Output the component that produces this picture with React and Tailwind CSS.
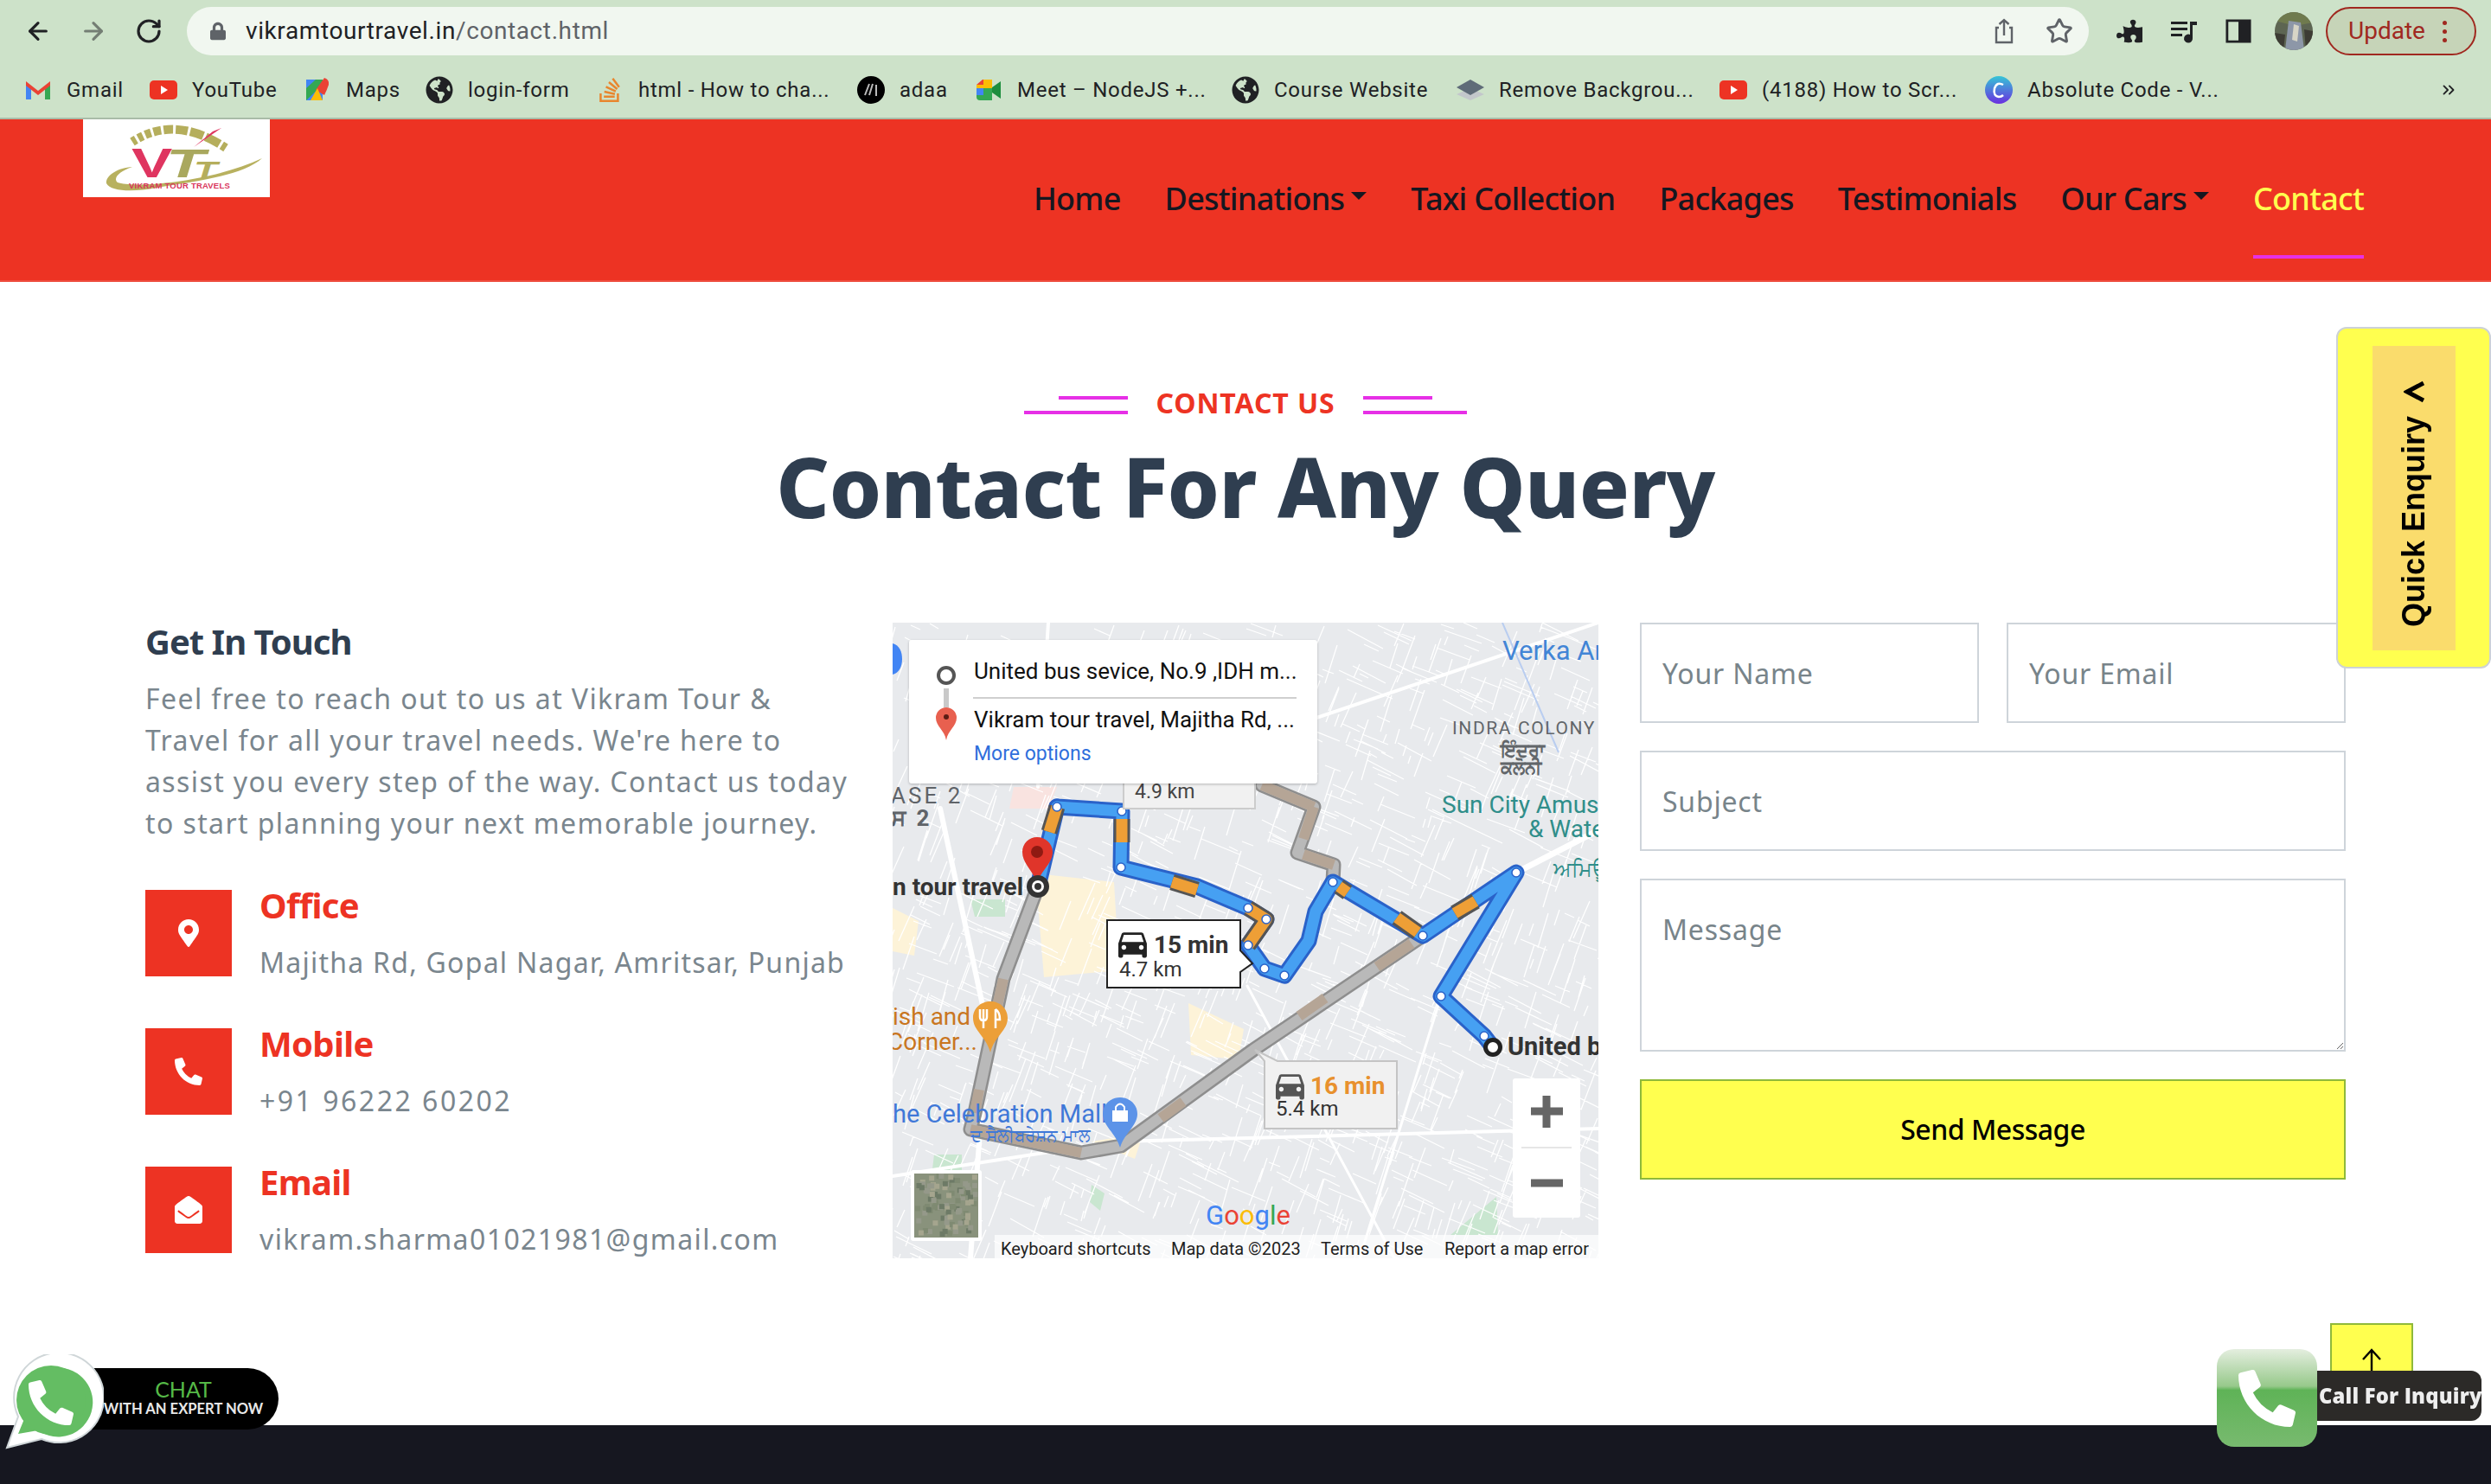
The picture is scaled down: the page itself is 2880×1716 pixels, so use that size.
import { ArrowLeft, ArrowRight, RotateCw, Star, ChevronsRight } from 'lucide-react';
import { FaMapMarkerAlt, FaPhoneAlt, FaEnvelopeOpen, FaGlobeAmericas, FaStackOverflow, FaPuzzlePiece, FaLock } from 'react-icons/fa';

const pageFont = "font-['Noto_Sans',sans-serif]";
const uiFont = "font-['Roboto',sans-serif]";

// thin street mesh for the map, seeded so it stays the same on every load
let seed = 7;
const rnd = () => {
    seed = (seed * 16807) % 2147483647;
    return seed / 2147483647;
};
const streets = [];
for (let i = 0; i < 1500; i++) {
    const x = rnd() * 816;
    const y = rnd() * 735;
    const a = rnd() > 0.5 ? 0.35 + rnd() * 0.15 : 1.85 + rnd() * 0.15;
    const len = 10 + rnd() * 38;
    streets.push(`M${x.toFixed(0)} ${y.toFixed(0)}L${(x + Math.cos(a) * len).toFixed(0)} ${(y + Math.sin(a) * len).toFixed(0)}`);
}
const speckles = [];
for (let i = 0; i < 90; i++) {
    speckles.push({ x: 25 + rnd() * 68, y: 637 + rnd() * 68, c: ['#6d7a66', '#a5a58e', '#7f8a72', '#95998a'][Math.floor(rnd() * 4)] });
}

const CAR = 'M18.92 6.01C18.72 5.42 18.16 5 17.5 5h-11c-.66 0-1.21.42-1.42 1.01L3 12v8c0 .55.45 1 1 1h1c.55 0 1-.45 1-1v-1h12v1c0 .55.45 1 1 1h1c.55 0 1-.45 1-1v-8l-2.08-5.99zM6.5 16c-.83 0-1.5-.67-1.5-1.5S5.67 13 6.5 13s1.5.67 1.5 1.5S7.33 16 6.5 16zm11 0c-.83 0-1.5-.67-1.5-1.5s.67-1.5 1.5-1.5 1.5.67 1.5 1.5-.67 1.5-1.5 1.5zM5 11l1.5-4.5h11L19 11H5z';

const blueRoute = '190,213 265,218 264,283 352,305 411,330 432,343 411,373 430,400 453,408 481,368 489,334 509,300 613,362 721,289 634,432 684,478 694,491';
const startLeg = '168,305 190,213';
const grayOne = '168,305 128,412 95,567 90,586 218,613 264,605 417,494 613,362';
const grayTwo = '427,188 487,213 468,266 510,280 509,300';
const orangeBits = ['190,213 181,242', '265,227 265,254', '323,300 352,309', '411,330 432,343 411,373', '516,305 526,312', '583,341 607,358', '650,336 674,322'];
const brownBits = ['128,412 115,470', '100,540 95,567', '90,586 218,613', '310,573 336,554', '470,455 500,434', '560,398 600,371', '427,188 487,213', '487,213 475,250', '475,268 510,280'];
const dots = ['190,213', '265,218', '264,283', '411,330', '432,343', '411,373', '430,400', '453,408', '509,300', '613,362', '721,289', '634,432', '684,478'];

function MapDrawing() {
    return (
        <svg viewBox="0 0 816 735" className="block w-full h-full">
            <rect width="816" height="735" fill="#e8eaed" />
            <path d="M165 290L256 300L262 402L175 410Z M342 440L406 470L400 505L345 500Z M0 330L30 345L25 385L0 380Z M230 600L290 590L280 620Z" fill="#fdf3d8" />
            <path d="M90 320H130V340H95Z M645 708L698 664L700 708Z M48 615H80V640H45Z M230 650L245 660L240 680L228 670Z" fill="#c9e6d0" />
            <path d="M140 190H190L180 215H135Z" fill="#f9e3e0" />
            <path d={streets.join('')} stroke="#fff" strokeWidth="1.3" fill="none" />
            <g stroke="#fff" fill="none" strokeLinecap="round">
                <path d="M55 215L110 470L90 735" strokeWidth="6" />
                <path d="M0 640L260 600L816 585" strokeWidth="4" />
                <path d="M721 289L816 240" strokeWidth="7" />
                <path d="M490 110L816 0" strokeWidth="4" />
                <path d="M634 432L540 735" strokeWidth="3" />
                <path d="M410 420L580 735" strokeWidth="3" />
                <path d="M168 190L180 0" strokeWidth="4" />
            </g>
            <path d="M705 0L770 150" stroke="#b9cdf0" strokeWidth="2" fill="none" />

            <g fill="none" strokeLinejoin="round" strokeLinecap="round">
                <polyline points={grayOne} stroke="#8e8e8e" strokeWidth="17" />
                <polyline points={grayTwo} stroke="#8e8e8e" strokeWidth="17" />
                <polyline points={grayOne} stroke="#b9b9b9" strokeWidth="12" />
                <polyline points={grayTwo} stroke="#b9b9b9" strokeWidth="12" />
                {brownBits.map((p) => <polyline key={p} points={p} stroke="#b5a596" strokeWidth="12" strokeLinecap="butt" />)}
                <polyline points={startLeg} stroke="#2a62c9" strokeWidth="19" />
                <polyline points={blueRoute} stroke="#2a62c9" strokeWidth="19" />
                <polyline points={startLeg} stroke="#46a0f2" strokeWidth="13" />
                <polyline points={blueRoute} stroke="#46a0f2" strokeWidth="13" />
                {orangeBits.map((p) => <polyline key={p} points={p} stroke="#555" strokeWidth="19" strokeLinecap="butt" />)}
                {orangeBits.map((p) => <polyline key={p + 'o'} points={p} stroke="#ee9f36" strokeWidth="13" strokeLinecap="butt" />)}
            </g>
            {dots.map((p) => {
                const [cx, cy] = p.split(',');
                return <circle key={p} cx={cx} cy={cy} r="5" fill="#fff" stroke="#2a62c9" strokeWidth="1.5" />;
            })}

            <path d="M0 24C8 26 11 34 11 42C11 50 8 58 0 60Z" fill="#4285f4" />

            {/* traffic boxes */}
            <g>
                <path d="M267 170H419V215H267Z" fill="#f1f1f1" stroke="#ccc" strokeWidth="2" />
                <text x="280" y="203" fontSize="23" fill="#444" fontFamily="Roboto, sans-serif">4.9 km</text>
                <path d="M430 507L419 494L445 507H583V585H430Z" fill="#f1f1f1" stroke="#c4c4c4" strokeWidth="2" />
                <g transform="translate(437.5 513) scale(1.83)"><path d={CAR} fill="#555" /></g>
                <text x="483" y="545" fontSize="28" fontWeight="700" fill="#e8912e" fontFamily="Roboto, sans-serif">16 min</text>
                <text x="443" y="570" fontSize="24" fill="#333" fontFamily="Roboto, sans-serif">5.4 km</text>
                <path d="M248 344H402V379L416 394L402 404V422H248Z" fill="#fff" stroke="#222" strokeWidth="2" />
                <g transform="translate(255.5 349) scale(1.83)"><path d={CAR} fill="#222" /></g>
                <text x="302" y="382" fontSize="28" fontWeight="700" fill="#333" fontFamily="Roboto, sans-serif">15 min</text>
                <text x="262" y="409" fontSize="24" fill="#333" fontFamily="Roboto, sans-serif">4.7 km</text>
            </g>

            {/* pins and markers */}
            <path d="M167 300C160 284 150 278 150 265C150 255 158 248 167 248C176 248 185 255 185 265C185 278 174 284 167 300Z" fill="#e0352a" />
            <circle cx="167" cy="265" r="7" fill="#8f1a12" />
            <circle cx="168" cy="305" r="10" fill="#fff" stroke="#333" strokeWidth="6" />
            <circle cx="168" cy="305" r="4" fill="#333" />
            <circle cx="694" cy="491" r="8.5" fill="#fff" stroke="#222" strokeWidth="5" />

            <g fontFamily="Roboto, sans-serif">
                <text x="705" y="43" fontSize="31" fill="#4285d6">Verka Amritsar</text>
                <text x="647" y="129" fontSize="21" fill="#62666a" letterSpacing="1.6">INDRA COLONY</text>
                <text x="703" y="155" fontSize="21" fontWeight="700" fill="#62666a" fontFamily="'Noto Sans', sans-serif">ਇੰਦਰਾ</text>
                <text x="703" y="175" fontSize="21" fontWeight="700" fill="#62666a" fontFamily="'Noto Sans', sans-serif">ਕਲੋਨੀ</text>
                <text x="635" y="220" fontSize="28" fill="#2f8e8a">Sun City Amusement</text>
                <text x="735" y="248" fontSize="28" fill="#2f8e8a">&amp; Water</text>
                <text x="764" y="293" fontSize="24" fill="#2f8e8a" fontFamily="'Noto Sans', sans-serif">ਅਮਿਊਜ਼</text>
                <text x="-2" y="209" fontSize="26" fill="#5f6368" letterSpacing="3">ASE 2</text>
                <text x="-2" y="235" fontSize="26" fill="#5f6368" letterSpacing="3" fontWeight="700">ਸ 2</text>
                <text x="0" y="315" fontSize="28" fontWeight="700" fill="#333">n tour travel</text>
                <text x="711" y="500" fontSize="29" fontWeight="700" fill="#333">United bus</text>
                <text x="0" y="465" fontSize="28" fill="#c9761f">ish and</text>
                <text x="-6" y="494" fontSize="28" fill="#c9761f">Corner...</text>
                <text x="0" y="578" fontSize="29" fill="#3f78d8">he Celebration Mall</text>
                <text x="90" y="600" fontSize="20" fill="#3f78d8" fontFamily="'Noto Sans', sans-serif">ਦ ਸੈਲੀਬਰੇਸ਼ਨ ਮਾਲ</text>
            </g>

            <path d="M113 497C108 478 93 472 93 457C93 446 102 438 113 438C124 438 133 446 133 457C133 472 118 478 113 497Z" fill="#ec9f38" />
            <path d="M105 447V469M101 447V456Q101 460 105 460Q109 460 109 456V447M119 447V469M119 447Q124 450 124 459H119" stroke="#fff" strokeWidth="2.5" fill="none" />
            <path d="M263 607C258 590 243 582 243 568C243 557 252 549 263 549C274 549 283 557 283 568C283 582 268 590 263 607Z" fill="#5c93e8" />
            <path d="M254 564H272V577H254Z" fill="#fff" />
            <path d="M258 564V560Q263 553 268 560V564" stroke="#fff" strokeWidth="2" fill="none" />

            {/* zoom control */}
            <rect x="717" y="527" width="78" height="161" rx="3" fill="#fff" />
            <path d="M738 565H775M756 547V584" stroke="#666" strokeWidth="9" />
            <path d="M727 607H785" stroke="#e6e6e6" strokeWidth="2" />
            <path d="M738 648H775" stroke="#666" strokeWidth="9" />

            {/* satellite thumbnail */}
            <rect x="21" y="633" width="82" height="82" rx="3" fill="#fff" />
            <rect x="25" y="637" width="74" height="74" fill="#89927c" />
            {speckles.map((s, i) => <rect key={i} x={s.x} y={s.y} width="6" height="6" fill={s.c} />)}

            <text x="362" y="696" fontSize="31" fontFamily="Roboto, sans-serif">
                <tspan fill="#4285f4">G</tspan><tspan fill="#ea4335">o</tspan><tspan fill="#fbbc05">o</tspan><tspan fill="#4285f4">g</tspan><tspan fill="#34a853">l</tspan><tspan fill="#ea4335">e</tspan>
            </text>

            <rect x="118" y="708" width="698" height="27" fill="#fff" fillOpacity="0.7" />
            <g fontSize="20" fill="#1f1f1f" fontFamily="Roboto, sans-serif">
                <text x="125" y="731">Keyboard shortcuts</text>
                <text x="322" y="731">Map data ©2023</text>
                <text x="495" y="731">Terms of Use</text>
                <text x="638" y="731">Report a map error</text>
            </g>
        </svg>
    );
}

function Logo() {
    return (
        <svg viewBox="0 0 216 90" className="block w-[216px] h-[90px] bg-white self-start ml-[96px] shrink-0">
            <path d="M57 26Q106 -6 165 33" fill="none" stroke="#b5ae5c" strokeWidth="10" strokeDasharray="5 3 6 3 7 3 9 3 11 3 14 3 16 3 18 3 20 3" />
            <path d="M160 10L128 32L150 14Z" fill="#df3560" />
            <path d="M207 45C185 65 130 72 85 79C60 84 32 84 27 74C26 65 40 56 57 55C42 60 34 68 40 73C60 80 150 72 207 45Z" fill="#b8b15f" />
            <text transform="translate(56 67) scale(1.45 1)" fontSize="49" fontWeight="700" fill="#df3560" fontFamily="'Liberation Sans', sans-serif">V</text>
            <text transform="translate(96 67) scale(1.6 1)" fontSize="46" fontWeight="700" fontStyle="italic" fill="#a9a85e" fontFamily="'Liberation Sans', sans-serif">T</text>
            <text transform="translate(128 69) scale(1.5 1)" fontSize="30" fontWeight="700" fontStyle="italic" fill="#b5ae5c" fontFamily="'Liberation Sans', sans-serif">T</text>
            <text x="53" y="80" fontSize="9.5" fontWeight="700" fill="#d9365c" letterSpacing="0.2" fontFamily="'Liberation Sans', sans-serif">VIKRAM TOUR TRAVELS</text>
        </svg>
    );
}

const bookmarks = [
    { label: 'Gmail', w: 'w-[145px]', icon: <svg viewBox="0 0 32 32" className="w-8 h-8"><path d="M2 8V27H8V14Z" fill="#4285f4" /><path d="M30 8V27H24V14Z" fill="#34a853" /><path d="M2 6L16 17L30 6V11L16 22L2 11Z" fill="#ea4335" /></svg> },
    { label: 'YouTube', w: 'w-[178px]', icon: <svg viewBox="0 0 32 32" className="w-8 h-8"><rect y="5" width="32" height="22" rx="5" fill="#ed3323" /><path d="M13 11L21 16L13 21Z" fill="#fff" /></svg> },
    { label: 'Maps', w: 'w-[141px]', icon: <svg viewBox="0 0 32 32" className="w-8 h-8"><path d="M3 4H22V28H3Z" fill="#34a853" /><path d="M3 28L22 10V28Z" fill="#4285f4" /><path d="M3 4H14L3 14Z" fill="#4285f4" /><path d="M14 16L24 2Q30 4 29 10Q27 16 24 22Z" fill="#ea4335" /><path d="M8 28L16 14L22 28Z" fill="#fbbc05" /></svg> },
    { label: 'login-form', w: 'w-[197px]', icon: <FaGlobeAmericas className="w-8 h-8 text-[#202124]" /> },
    { label: 'html - How to cha...', w: 'w-[302px]', icon: <FaStackOverflow className="w-8 h-8 text-[#e8862e]" /> },
    { label: 'adaa', w: 'w-[136px]', icon: <svg viewBox="0 0 32 32" className="w-8 h-8"><circle cx="16" cy="16" r="16" fill="#000" /><path d="M9 22L14 9M14 22L18 9M22 10V23" stroke="#bbb" strokeWidth="2" fill="none" /></svg> },
    { label: 'Meet – NodeJS +...', w: 'w-[297px]', icon: <svg viewBox="0 0 32 32" className="w-8 h-8"><path d="M2 10H10V4H20V14H2Z" fill="#fbbc05" /><path d="M2 10L9 4H10V10Z" fill="#ea4335" /><path d="M2 14H10V22H2Z" fill="#4285f4" /><path d="M10 14H20V28H6Q2 28 2 24V22H10Z" fill="#34a853" /><path d="M20 13L30 6V26L20 19Z" fill="#1e8e3e" /></svg> },
    { label: 'Course Website', w: 'w-[260px]', icon: <FaGlobeAmericas className="w-8 h-8 text-[#202124]" /> },
    { label: 'Remove Backgrou...', w: 'w-[304px]', icon: <svg viewBox="0 0 32 32" className="w-8 h-8"><path d="M16 14L32 21L16 28L0 21Z" fill="#c3c7cb" /><path d="M16 4L32 13L16 22L0 13Z" fill="#5f6b78" /></svg> },
    { label: '(4188) How to Scr...', w: 'w-[307px]', icon: <svg viewBox="0 0 32 32" className="w-8 h-8"><rect y="5" width="32" height="22" rx="5" fill="#ed3323" /><path d="M13 11L21 16L13 21Z" fill="#fff" /></svg> },
    { label: 'Absolute Code - V...', w: 'w-[300px]', icon: <svg viewBox="0 0 32 32" className="w-8 h-8"><defs><linearGradient id="absc" x1="0" y1="0" x2="0" y2="1"><stop offset="0" stopColor="#35c5d6" /><stop offset="1" stopColor="#6a2fe0" /></linearGradient></defs><circle cx="16" cy="16" r="16" fill="url(#absc)" /><path d="M21 10Q14 6 11 14Q9 23 16 24Q19 24 21 22" stroke="#fff" strokeWidth="2.5" fill="none" /></svg> },
];

function BrowserChrome() {
    return (
        <div className={`bg-[#cde2c9] border-b-2 border-[#a9bca8] ${uiFont}`}>
            <div className="h-[72px] flex items-center pl-[28px] pr-[17px]">
                <ArrowLeft className="w-8 h-8 text-[#202124] mr-[32px]" strokeWidth={2.4} />
                <ArrowRight className="w-8 h-8 text-[#747e74] mr-[32px]" strokeWidth={2.4} />
                <RotateCw className="w-8 h-8 text-[#202124] mr-[28px]" strokeWidth={2.4} />
                <div className="w-[2199px] h-14 bg-[#f1f7f0] rounded-full flex items-center pl-[27px] pr-[18px] text-[28px] tracking-[0.6px]">
                    <FaLock className="w-[18px] h-[22px] text-[#5f6368] mr-[23px]" />
                    <span className="text-[#202124]">vikramtourtravel.in<span className="text-[#5f6368]">/contact.html</span></span>
                    <div className="ml-auto flex items-center gap-[32px]">
                        <svg viewBox="0 0 32 32" className="w-8 h-8" fill="none" stroke="#5f6368" strokeWidth="2.4"><path d="M10 12H7V29H25V12H22M16 21V3M10.5 8L16 3L21.5 8" /></svg>
                        <Star className="w-8 h-8 text-[#5f6368]" strokeWidth={2.2} />
                    </div>
                </div>
                <div className="ml-[32px] flex items-center gap-[32px]">
                    <FaPuzzlePiece className="w-[30px] h-[30px] text-[#202124] scale-x-[-1]" />
                    <svg viewBox="0 0 32 32" className="w-8 h-8" fill="#202124"><path d="M1 5H20V8H1ZM1 12H20V15H1ZM1 19H14V22H1ZM23 5H31V9H26V24A5 5 0 1 1 23 20Z" /></svg>
                    <svg viewBox="0 0 32 32" className="w-[30px] h-[30px]" fill="none"><path d="M2 3H30V29H2Z" stroke="#202124" strokeWidth="3" /><path d="M16 3H30V29H16Z" fill="#202124" /></svg>
                </div>
                <svg viewBox="0 0 44 44" className="ml-[27px] w-11 h-11 rounded-full">
                    <rect width="44" height="44" fill="#5d6552" />
                    <path d="M0 0H44V12L24 16L0 10Z" fill="#6f7a4e" />
                    <path d="M16 10L30 12L34 44H12Z" fill="#8d97a8" />
                    <path d="M22 14L28 16L26 34L20 32Z" fill="#d7d5c6" />
                    <path d="M0 24L12 26L10 44H0Z M34 20L44 22V44H36Z" fill="#3d3c34" />
                </svg>
                <div className="ml-[15px] w-[174px] h-14 rounded-full border-2 border-[#a0281f] bg-[#c6d4b8] flex items-center pl-[24px] text-[28px] text-[#a0281f]">
                    <span>Update</span>
                    <span className="ml-[20px] flex flex-col gap-[5px]">
                        <span className="w-[5px] h-[5px] rounded-full bg-[#a0281f]" />
                        <span className="w-[5px] h-[5px] rounded-full bg-[#a0281f]" />
                        <span className="w-[5px] h-[5px] rounded-full bg-[#a0281f]" />
                    </span>
                </div>
            </div>
            <div className="h-[64px] flex items-center pl-[28px] text-[24px] tracking-[0.75px] text-[#202124] relative">
                {bookmarks.map((b) => (
                    <div key={b.label} className={`flex items-center gap-[17px] shrink-0 ${b.w}`}>
                        {b.icon}
                        <span className="whitespace-nowrap">{b.label}</span>
                    </div>
                ))}
                <ChevronsRight className="ml-auto mr-[38px] w-[22px] h-[22px] text-[#202124]" />
            </div>
        </div>
    );
}

function NavItem({ children, caret, active }) {
    return (
        <a className={`relative flex items-center whitespace-nowrap ${active ? 'text-[#ffff4f]' : 'text-[#161720]'}`}>
            {children}
            {caret && <span className="ml-[8px] mt-[-6px] w-0 h-0 border-x-[9px] border-x-transparent border-t-[9px] border-t-[#161720]" />}
            {active && <span className="absolute left-0 right-0 top-[92px] h-1 bg-[#e630e6]" />}
        </a>
    );
}

function NavBar() {
    return (
        <nav className={`h-[188px] bg-[#ed3323] border-b-2 border-[#ee4d3e] flex items-center pr-[147px] ${pageFont}`}>
            <Logo />
            <div className="ml-auto mt-[-3px] flex items-center gap-[51px] text-[36px] font-medium tracking-[-0.75px]">
                <NavItem>Home</NavItem>
                <NavItem caret>Destinations</NavItem>
                <NavItem>Taxi Collection</NavItem>
                <NavItem>Packages</NavItem>
                <NavItem>Testimonials</NavItem>
                <NavItem caret>Our Cars</NavItem>
                <NavItem active>Contact</NavItem>
            </div>
        </nav>
    );
}

function InfoRow({ icon, title, value, spacing }) {
    return (
        <div className="flex gap-8 items-start h-[100px]">
            <div className="w-[100px] h-[100px] bg-[#ed3323] flex items-center justify-center text-white shrink-0">{icon}</div>
            <div>
                <h5 className="text-[40px] leading-[48px] font-bold text-[#ed3323] tracking-[-0.7px] mt-[-6px]">{title}</h5>
                <p className={`mt-[18px] text-[32px] leading-[48px] text-[#7a868e] whitespace-nowrap ${spacing}`}>{value}</p>
            </div>
        </div>
    );
}

function RouteMap() {
    return (
        <div className="relative h-[735px] overflow-hidden">
            <MapDrawing />
            <div className={`absolute left-[19px] top-[20px] w-[472px] h-[166px] bg-white rounded-[3px] shadow-[0_1px_3px_rgba(0,0,0,0.25)] ${uiFont}`}>
                <div className="absolute left-[32px] top-[30px] w-[22px] h-[22px] rounded-full border-[4px] border-[#555] bg-white" />
                <div className="absolute left-[40px] top-[56px] w-[6px] h-[22px] bg-[#c9c9c9]" />
                <svg viewBox="0 0 24 38" className="absolute left-[31px] top-[78px] w-6 h-[38px]"><path d="M12 38C10 26 0 22 0 12A12 12 0 0 1 24 12C24 22 14 26 12 38Z" fill="#e8604f" /><circle cx="12" cy="11" r="3" fill="#5a1c14" /></svg>
                <p className="absolute left-[75px] top-[16px] text-[26px] leading-[40px] text-[#111] whitespace-nowrap">United bus sevice, No.9 ,IDH m...</p>
                <div className="absolute left-[74px] right-[24px] top-[66px] h-[2px] bg-[#cfcfcf]" />
                <p className="absolute left-[75px] top-[72px] text-[26px] leading-[40px] text-[#111] whitespace-nowrap">Vikram tour travel, Majitha Rd, ...</p>
                <p className="absolute left-[75px] top-[115px] text-[23px] leading-[34px] text-[#2f6fdc]">More options</p>
            </div>
        </div>
    );
}

const fieldClass = 'w-full border-2 border-[#ced4da] bg-white px-[24px] text-[32px] text-[#212529] placeholder:text-[#78848a] outline-none tracking-[0.8px]';

function ContactForm() {
    return (
        <form className="flex flex-col gap-8">
            <div className="grid grid-cols-2 gap-8">
                <input className={`${fieldClass} h-[116px]`} placeholder="Your Name" />
                <input className={`${fieldClass} h-[116px]`} placeholder="Your Email" />
            </div>
            <input className={`${fieldClass} h-[116px]`} placeholder="Subject" />
            <textarea className={`${fieldClass} h-[200px] py-[33px] resize-y block`} placeholder="Message" />
            <button type="button" className="h-[116px] bg-[#ffff4f] border-2 border-[#8fb93a] text-black text-[32px] font-medium tracking-[-0.5px]">Send Message</button>
        </form>
    );
}

function FloatingWidgets() {
    return (
        <>
            {/* quick enquiry tab */}
            <div className="absolute left-[2701px] top-[378px] w-[179px] h-[395px] bg-[#ffff4f] border-2 border-[#cdd2d6] rounded-[12px] flex items-center justify-center">
                <div className="w-[96px] h-[352px] bg-[#fadc6c] flex flex-col items-center pt-[40px] gap-[15px]">
                    <svg viewBox="0 0 24 26" className="w-[24px] h-[26px] shrink-0" fill="none" stroke="#000" strokeWidth="5"><path d="M23 3L4 13L23 23" /></svg>
                    <span className="[writing-mode:vertical-rl] rotate-180 text-[36px] leading-[40px] font-bold text-black whitespace-nowrap font-['Liberation_Sans',sans-serif] blur-[0.4px]">Quick Enquiry</span>
                </div>
            </div>

            {/* whatsapp chat badge */}
            <div className="absolute left-[60px] top-[1582px] w-[262px] h-[71px] bg-black rounded-r-[36px] flex flex-col items-center pl-[42px] font-['Lato',sans-serif]">
                <span className="text-[25px] leading-[26px] mt-[11px] text-[#55b947]">CHAT</span>
                <span className="text-[16.6px] leading-[20px] font-bold text-[#e8e8e8] whitespace-nowrap">WITH AN EXPERT NOW</span>
            </div>
            <svg viewBox="0 0 116 112" className="absolute left-[4px] top-[1566px] w-[116px] h-[112px]">
                <path d="M4 108L17 72A52 52 0 1 1 44 98Z" fill="#fff" stroke="#cfd6d8" strokeWidth="2" />
                <path d="M17 92L26 70A40 40 0 1 1 40 88Z" fill="#64bd63" />
                <circle cx="55" cy="53" r="40" fill="#64bd63" />
            </svg>
            <FaPhoneAlt className="absolute left-[33px] top-[1596px] w-[52px] h-[52px] text-white" />

            {/* back to top */}
            <div className="absolute left-[2694px] top-[1530px] w-[96px] h-[96px] bg-[#ffff4f] border-2 border-[#8fb93a] flex justify-center">
                <svg viewBox="0 0 24 60" className="w-6 h-[60px] mt-[27px]" fill="none" stroke="#000" strokeWidth="2.4"><path d="M12 2V60M2 13L12 2L22 13" /></svg>
            </div>

            {/* call badge */}
            <div className="absolute left-[2675px] top-[1585px] w-[194px] h-[58px] bg-[#2c2a28] rounded-r-[12px] flex items-center justify-center pl-[6px]">
                <span className="font-['Open_Sans',sans-serif] font-extrabold text-[25px] text-[#eee] tracking-[0.2px] whitespace-nowrap blur-[0.5px] scale-x-[0.95]">Call For Inquiry</span>
            </div>
            <div className="absolute left-[2563px] top-[1560px] w-[116px] h-[113px] rounded-[20px] bg-[linear-gradient(#e4eedf_0%,#97c98b_38%,#5fb357_42%,#78ba6f_100%)] flex items-center justify-center">
                <FaPhoneAlt className="w-[66px] h-[66px] text-white" />
            </div>
        </>
    );
}

export default function App() {
    return (
        <div className={`relative w-[2880px] h-[1716px] overflow-hidden bg-white flex flex-col ${pageFont}`}>
            <BrowserChrome />
            <NavBar />

            <main className="flex-1 pt-[116px]">
                <div className="flex items-center justify-center gap-8 h-12">
                    <div className="flex flex-col items-end gap-[13px] w-[120px] mt-[4px]">
                        <span className="w-[80px] h-1 bg-[#e630e6]" />
                        <span className="w-[120px] h-1 bg-[#e630e6]" />
                    </div>
                    <span className="text-[32px] font-bold text-[#ed3323] tracking-[0.9px]">CONTACT US</span>
                    <div className="flex flex-col items-start gap-[13px] w-[120px] mt-[4px]">
                        <span className="w-[80px] h-1 bg-[#e630e6]" />
                        <span className="w-[120px] h-1 bg-[#e630e6]" />
                    </div>
                </div>
                <h1 className="mt-[14px] text-center text-[96px] leading-[115px] font-extrabold text-[#2f3e50] tracking-[-0.6px]">Contact For Any Query</h1>

                <div className="mt-[101px] px-[168px] grid grid-cols-3 gap-12">
                    <div>
                        <h4 className="text-[40px] leading-[48px] font-bold text-[#2f3e50] tracking-[-1px] mt-[-2px]">Get In Touch</h4>
                        <p className="mt-[18px] text-[32px] leading-[48px] text-[#7a868e] tracking-[1.4px] whitespace-nowrap">
                            Feel free to reach out to us at Vikram Tour &amp;<br />
                            Travel for all your travel needs. We're here to<br />
                            assist you every step of the way. Contact us today<br />
                            to start planning your next memorable journey.
                        </p>
                        <div className="mt-[53px] flex flex-col gap-[60px]">
                            <InfoRow icon={<FaMapMarkerAlt size={32} />} title="Office" value="Majitha Rd, Gopal Nagar, Amritsar, Punjab" spacing="tracking-[1.25px]" />
                            <InfoRow icon={<FaPhoneAlt size={32} />} title="Mobile" value="+91 96222 60202" spacing="tracking-[2.5px]" />
                            <InfoRow icon={<FaEnvelopeOpen size={32} />} title="Email" value="vikram.sharma01021981@gmail.com" spacing="tracking-[1.4px]" />
                        </div>
                    </div>
                    <RouteMap />
                    <ContactForm />
                </div>
            </main>

            <footer className="h-[68px] bg-[#161720]" />
            <FloatingWidgets />
        </div>
    );
}
